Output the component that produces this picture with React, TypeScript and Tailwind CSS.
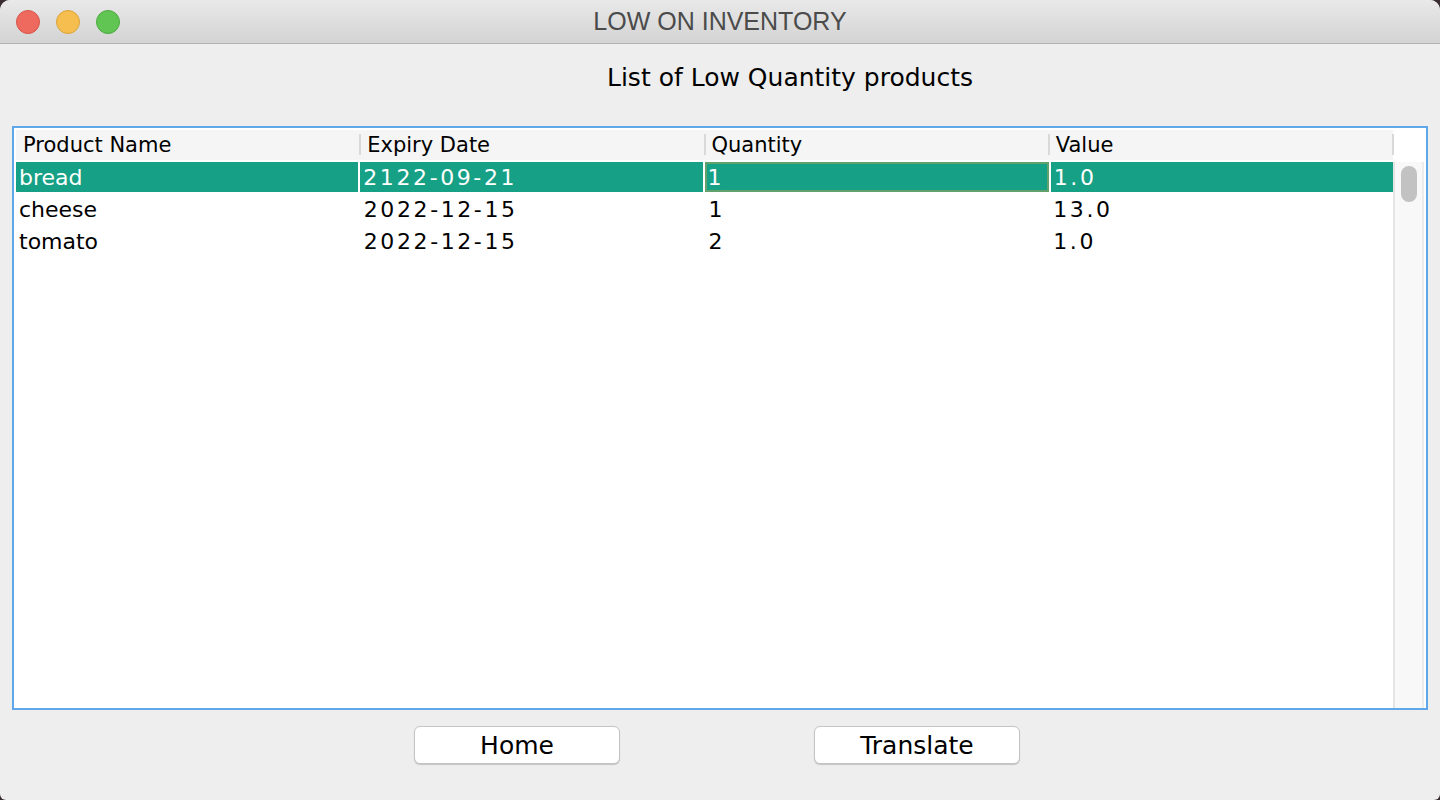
import React from 'react';

type Row = { name: string; expiry: string; qty: string; value: string };

const rows: Row[] = [
  { name: 'bread', expiry: '2122-09-21', qty: '1', value: '1.0' },
  { name: 'cheese', expiry: '2022-12-15', qty: '1', value: '13.0' },
  { name: 'tomato', expiry: '2022-12-15', qty: '2', value: '1.0' },
];

const columns = ['Product Name', 'Expiry Date', 'Quantity', 'Value'];

const sans = { fontFamily: '"DejaVu Sans", "Noto Sans", sans-serif' };

function TrafficLights() {
  return (
    <div className="flex items-center gap-[16px] pl-[16px]">
      <span className="w-[24px] h-[24px] rounded-full bg-[#ee6a5f] border border-[#d65448]" />
      <span className="w-[24px] h-[24px] rounded-full bg-[#f5be4f] border border-[#d9a33b]" />
      <span className="w-[24px] h-[24px] rounded-full bg-[#61c554] border border-[#4ca93f]" />
    </div>
  );
}

function TitleBar() {
  return (
    <div className="relative h-[44px] flex items-center bg-gradient-to-b from-[#e9e9e9] to-[#d3d3d3] border-b border-[#b1b1b1]">
      <TrafficLights />
      <div
        className="absolute inset-0 flex items-center justify-center text-[25px] text-[#4b4b4b]"
        style={{ fontFamily: '"Liberation Sans", Arial, sans-serif' }}
      >
        LOW ON INVENTORY
      </div>
    </div>
  );
}

function HeaderRow() {
  return (
    <div className="flex h-[30px] bg-[#f5f5f5] mb-[2px]">
      {columns.map((c) => (
        <div key={c} className="flex-1 flex items-center relative">
          <span className="pl-[7px] text-[21px] text-black leading-none">{c}</span>
          <span className="absolute right-[-1px] top-[4px] bottom-[5px] w-[2px] bg-[#d9d9d9]" />
        </div>
      ))}
    </div>
  );
}

function DataRow({ row, selected }: { row: Row; selected: boolean }) {
  const cells = [row.name, row.expiry, row.qty, row.value];
  return (
    <div className="flex gap-[2px] h-[32px] pb-[2px]">
      {cells.map((v, i) => {
        const focused = selected && i === 2;
        return (
          <div
            key={i}
            className={
              'flex-1 flex items-center text-[22px] leading-none pt-[2px] ' +
              (i > 0 ? 'tracking-[2.6px] ' : '') +
              (selected ? 'bg-[#16a085] text-white ' : 'text-black ') +
              (focused ? 'border-2 border-[#62a06c] pl-[1px]' : 'pl-[3px]')
            }
          >
            {v}
          </div>
        );
      })}
    </div>
  );
}

function Scrollbar() {
  return (
    <div className="w-[33px] flex flex-col">
      <div className="h-[32px] bg-white" />
      <div className="flex-1 bg-[#f8f8f8] border-l-2 border-[#e4e4e4] border-r-2 border-r-[#ececec] mr-[2px] pt-[4px] flex justify-center">
        <div className="w-[16px] h-[36px] rounded-full bg-[#c2c2c2]" />
      </div>
    </div>
  );
}

function ProductTable() {
  return (
    <div className="mx-[12px] h-[584px] border-2 border-[#5ea7e8] bg-white flex pt-[2px] pl-[2px]">
      <div className="flex-1 flex flex-col">
        <HeaderRow />
        {rows.map((r, i) => (
          <DataRow key={r.name} row={r} selected={i === 0} />
        ))}
      </div>
      <Scrollbar />
    </div>
  );
}

function MacButton({ label }: { label: string }) {
  return (
    <button className="w-[206px] h-[38px] rounded-[6px] bg-white border border-[#c4c4c4] shadow-[0_1px_1px_rgba(0,0,0,0.18)] text-[25px] text-black leading-none">
      {label}
    </button>
  );
}

export default function App() {
  return (
    <div className="w-[1440px] h-[800px] bg-[#3a2b30] overflow-hidden">
      <div className="w-full h-full rounded-t-[10px] rounded-b-[6px] overflow-hidden bg-[#eeeeee] flex flex-col" style={sans}>
        <TitleBar />
        <div className="h-[82px] flex items-start justify-center pl-[140px] pt-[18px]">
          <span className="text-[25px] text-black leading-[32px]">List of Low Quantity products</span>
        </div>
        <ProductTable />
        <div className="flex justify-center gap-[194px] mt-[16px] pr-[6px]">
          <MacButton label="Home" />
          <MacButton label="Translate" />
        </div>
      </div>
    </div>
  );
}
